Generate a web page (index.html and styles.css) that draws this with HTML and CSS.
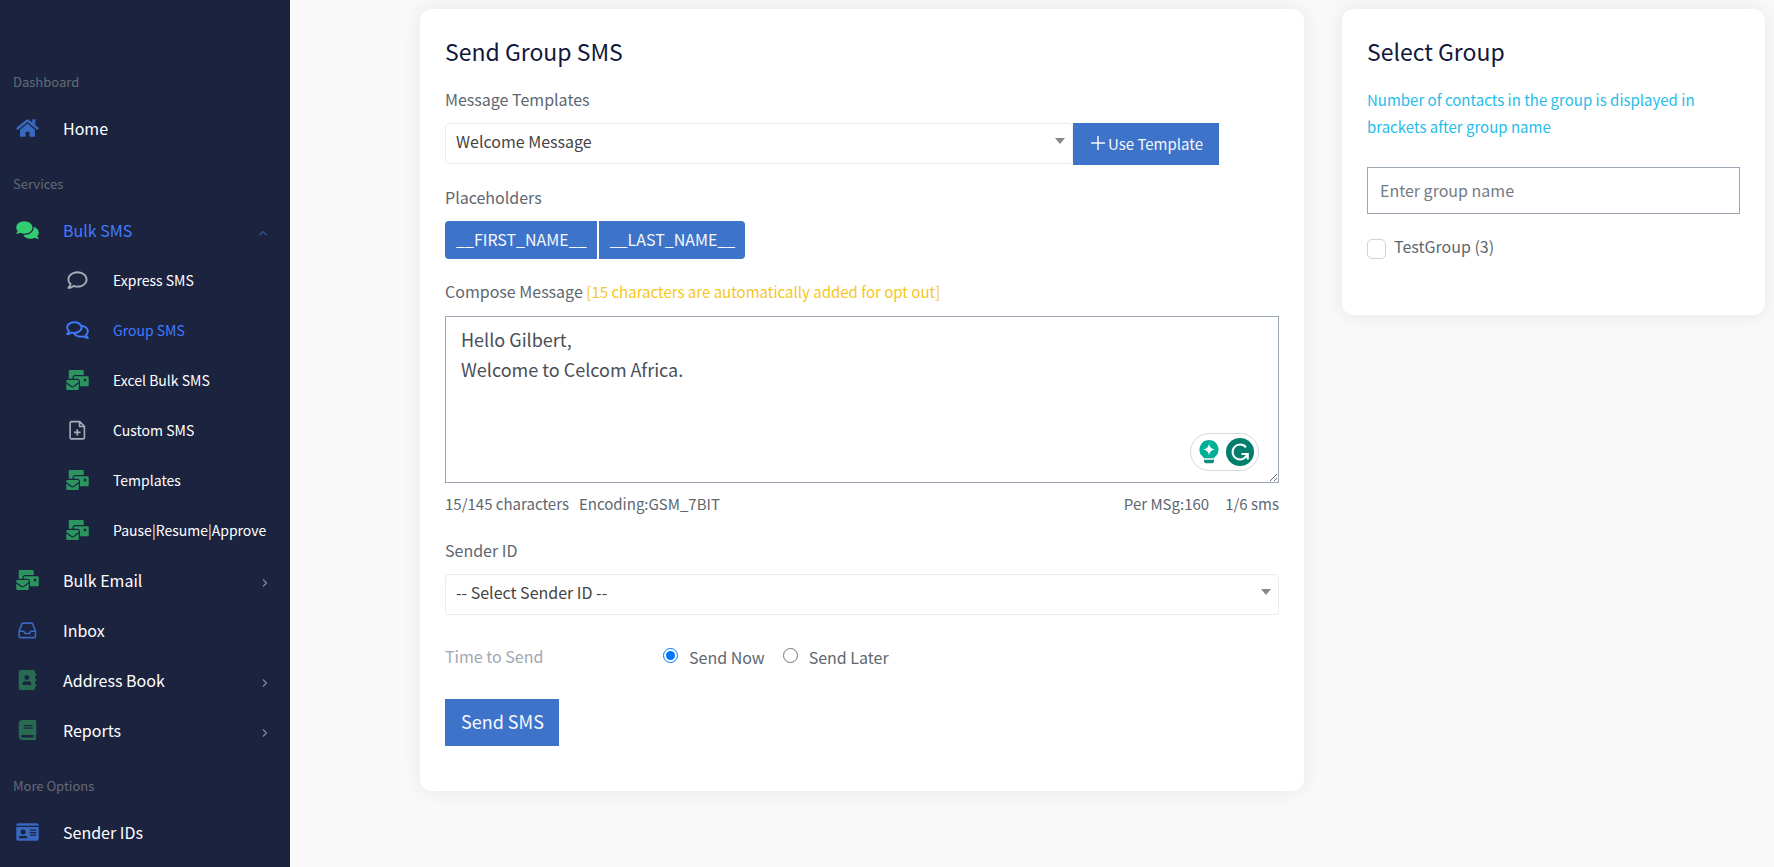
FILE: index.html
```html
<!DOCTYPE html>
<html lang="en">
<head>
<meta charset="utf-8">
<meta name="viewport" content="width=device-width, initial-scale=1">
<title>Send Group SMS</title>
<link rel="stylesheet" href="styles.css">
</head>
<body>
<svg class="sprite" aria-hidden="true">
  <symbol id="i-home" viewBox="0 0 576 512"><path d="M280.37 148.26L96 300.11V464a16 16 0 0 0 16 16l112.06-.29a16 16 0 0 0 15.92-16V368a16 16 0 0 1 16-16h64a16 16 0 0 1 16 16v95.64a16 16 0 0 0 16 16.05L464 480a16 16 0 0 0 16-16V300L295.67 148.26a12.19 12.19 0 0 0-15.3 0zM571.6 251.47L488 182.56V44.05a12 12 0 0 0-12-12h-56a12 12 0 0 0-12 12v72.61L318.47 43a48 48 0 0 0-61 0L4.34 251.47a12 12 0 0 0-1.6 16.9l25.5 31A12 12 0 0 0 45.15 301l235.22-193.74a12.19 12.19 0 0 1 15.3 0L530.9 301a12 12 0 0 0 16.9-1.6l25.5-31a12 12 0 0 0-1.7-16.93z"/></symbol>
  <symbol id="i-comments-solid" viewBox="0 0 576 512"><path d="M416 192c0-88.4-93.1-160-208-160S0 103.6 0 192c0 34.3 14.1 65.9 38 92-13.4 30.2-35.5 54.2-35.8 54.5-2.2 2.3-2.8 5.7-1.5 8.7S4.8 352 8 352c36.6 0 66.9-12.3 88.7-25 32.2 15.7 70.3 25 111.3 25 114.9 0 208-71.6 208-160zm122 220c23.9-26 38-57.7 38-92 0-66.9-53.5-124.2-129.3-148.1.9 6.6 1.3 13.3 1.3 20.1 0 105.9-107.7 192-240 192-10.8 0-21.3-.8-31.7-1.9C207.8 439.6 281.8 480 368 480c41 0 79.1-9.2 111.3-25 21.8 12.7 52.1 25 88.7 25 3.2 0 6.1-1.9 7.3-4.8 1.3-2.9.7-6.3-1.5-8.7-.3-.3-22.4-24.2-35.8-54.5z"/></symbol>
  <symbol id="i-comment" viewBox="-32 0 576 512"><path d="M256 32C114.6 32 0 125.1 0 240c0 47.6 19.9 91.2 52.9 126.3C38 405.7 7 439.1 6.5 439.5c-6.6 7-8.4 17.2-4.6 26S14.4 480 24 480c61.5 0 110-25.7 139.1-46.3C192 442.8 223.2 448 256 448c141.4 0 256-93.1 256-208S397.4 32 256 32zm0 368c-26.7 0-53.1-4.1-78.4-12.1l-22.7-7.2-19.5 13.8c-14.3 10.1-33.9 21.4-57.5 29 7.3-12.1 14.4-25.7 19.9-40.2l10.6-28.1-20.6-21.8C69.7 314.1 48 282.2 48 240c0-88.2 93.3-160 208-160s208 71.8 208 160-93.3 160-208 160z"/></symbol>
  <symbol id="i-comments" viewBox="0 0 576 512"><path d="M532 386.2c27.5-27.1 44-61.1 44-98.2 0-80-76.5-146.1-176.2-157.9C368.3 72.5 294.3 32 208 32 93.1 32 0 103.6 0 192c0 37 16.5 71 44 98.2-15.3 30.7-37.3 54.5-37.7 54.9-6.3 6.7-8.1 16.5-4.4 25 3.6 8.5 12 14 21.2 14 53.5 0 96.7-20.2 125.2-38.8 9.2 2.1 18.7 3.7 28.4 4.9C208.1 407.6 281.8 448 368 448c20.8 0 40.8-2.4 59.8-6.8C456.3 459.7 499.4 480 553 480c9.2 0 17.5-5.5 21.2-14 3.6-8.5 1.9-18.3-4.4-25-.4-.3-22.5-24.1-37.8-54.8zm-392.8-92.3L122.1 305c-14.1 9.1-28.5 16.3-43.1 21.4 2.7-4.7 5.4-9.7 8-14.8l15.5-31.1L77.7 256C64.2 242.6 48 220.7 48 192c0-60.7 73.3-112 160-112s160 51.3 160 112-73.3 112-160 112c-16.5 0-33-1.9-49-5.6l-19.8-4.5zM498.3 352l-24.7 24.4 15.5 31.1c2.6 5.1 5.3 10.1 8 14.8-14.6-5.1-29-12.3-43.1-21.4l-17.1-11.1-19.9 4.6c-16 3.7-32.5 5.6-49 5.6-54 0-102.2-20.1-131.3-49.7C338 339.5 416 272.9 416 192c0-3.4-.4-6.7-.7-10C479.7 196.5 528 238.8 528 288c0 28.7-16.2 50.6-29.7 64z"/></symbol>
  <symbol id="i-bulk" viewBox="0 0 576 512"><path d="M160 448c-25.6 0-51.2-22.4-64-32-64-44.8-83.2-60.8-96-70.4V480c0 17.67 14.33 32 32 32h256c17.67 0 32-14.33 32-32V345.6c-12.8 9.6-32 25.6-96 70.4-12.8 9.6-38.4 32-64 32zm128-192H32c-17.67 0-32 14.33-32 32v16c25.6 19.2 22.4 19.2 115.2 86.4 9.6 6.4 28.8 25.6 44.8 25.6s35.2-19.2 44.8-22.4c92.8-67.2 89.6-67.2 115.2-86.4V288c0-17.67-14.33-32-32-32zm256-96H224c-17.67 0-32 14.33-32 32v32h96c33.21 0 60.59 25.42 63.71 57.82l.29-.22V416h192c17.67 0 32-14.33 32-32V192c0-17.67-14.33-32-32-32zm-32 128h-64v-64h64v64zm-352-96c0-35.29 28.71-64 64-64h224V32c0-17.67-14.33-32-32-32H96C78.33 0 64 14.33 64 32v192h96v-32z"/></symbol>
  <symbol id="i-file" viewBox="0 0 23 20"><path fill="none" stroke="currentColor" stroke-width="1.6" stroke-linejoin="round" d="M5.500 1.600h8.200l4.700 4.700v11.200a1.400 1.400 0 0 1-1.400 1.400H5.500a1.400 1.400 0 0 1-1.400-1.400V3A1.400 1.400 0 0 1 5.500 1.600zM13.500 1.600v4.900h4.900M11.300 9.200v6.400M8.100 12.400h6.400"/></symbol>
  <symbol id="i-inbox" viewBox="0 0 23 20"><path fill="none" stroke="currentColor" stroke-width="1.600" stroke-linejoin="round" d="M3.100 11.200 5.900 3.900a1.400 1.400 0 0 1 1.300-.8h8.200a1.400 1.400 0 0 1 1.300.8l2.800 7.300v5a1.400 1.400 0 0 1-1.400 1.400H4.500a1.400 1.400 0 0 1-1.400-1.400zM3.100 11.200h4.500l1.500 2.300h4.400l1.500-2.300h4.500"/></symbol>
  <symbol id="i-address" viewBox="-64 0 576 512"><path fill-rule="evenodd" d="M436 160c6.6 0 12-5.4 12-12v-40c0-6.6-5.4-12-12-12h-20V48c0-26.5-21.5-48-48-48H48C21.5 0 0 21.5 0 48v416c0 26.5 21.5 48 48 48h320c26.5 0 48-21.5 48-48v-48h20c6.6 0 12-5.4 12-12v-40c0-6.6-5.4-12-12-12h-20v-64h20c6.6 0 12-5.4 12-12v-40c0-6.6-5.4-12-12-12h-20v-64h20zm-228-32c35.3 0 64 28.7 64 64s-28.7 64-64 64-64-28.7-64-64 28.7-64 64-64zm112 236.8c0 10.6-10 19.2-22.4 19.2H118.4C106 384 96 375.4 96 364.8v-19.2c0-31.8 30.1-57.6 67.2-57.6h5c12.3 5.1 25.7 8 39.8 8s27.6-2.9 39.8-8h5c37.1 0 67.2 25.8 67.2 57.6v19.2z"/></symbol>
  <symbol id="i-book" viewBox="-64 0 576 512"><path fill-rule="evenodd" d="M448 360V24c0-13.3-10.7-24-24-24H96C43 0 0 43 0 96v320c0 53 43 96 96 96h328c13.3 0 24-10.7 24-24v-16c0-7.5-3.5-14.3-8.9-18.7-4.2-15.4-4.2-59.3 0-74.7 5.4-4.3 8.9-11.1 8.9-18.6zM128 134c0-3.3 2.7-6 6-6h212c3.3 0 6 2.7 6 6v20c0 3.3-2.7 6-6 6H134c-3.3 0-6-2.7-6-6v-20zm0 64c0-3.3 2.7-6 6-6h212c3.3 0 6 2.7 6 6v20c0 3.3-2.7 6-6 6H134c-3.3 0-6-2.7-6-6v-20zm253.4 250H96c-17.7 0-32-14.3-32-32 0-17.6 14.4-32 32-32h285.4c-1.900 17.100-1.900 46.900 0 64z"/></symbol>
  <symbol id="i-card" viewBox="0 0 576 512"><path fill-rule="evenodd" d="M528 32H48C21.5 32 0 53.5 0 80v16h576V80c0-26.5-21.5-48-48-48zM0 432c0 26.5 21.5 48 48 48h480c26.5 0 48-21.5 48-48V128H0v304zM352 192h160v32H352zM352 256h160v32H352zM352 320h160v32H352zM176 192c35.3 0 64 28.7 64 64s-28.7 64-64 64-64-28.7-64-64 28.7-64 64-64zM67.1 396.2C75.5 370.5 99.6 352 128 352h8.2c12.3 5.1 25.7 8 39.8 8s27.6-2.9 39.8-8h8.2c28.4 0 52.5 18.5 60.9 44.2 3.2 9.9-5.2 19.8-15.6 19.8H82.7c-10.4 0-18.8-10-15.6-19.8z"/></symbol>
  <symbol id="i-chevron" viewBox="0 0 10 10"><path fill="none" stroke="currentColor" stroke-width="1.2" d="M3 1.500 6.500 5 3 8.500"/></symbol>
</svg>

<div class="app">
  <nav class="sidebar" aria-label="Main">
    <h2 class="nav-heading">Dashboard</h2>
    <a class="nav-link" href="#"><svg class="icon blue"><use href="#i-home"/></svg>Home</a>
    <h2 class="nav-heading">Services</h2>
    <a class="nav-link current" href="#"><svg class="icon lime"><use href="#i-comments-solid"/></svg>Bulk SMS<svg class="chevron up"><use href="#i-chevron"/></svg></a>
    <div class="subnav">
      <a class="nav-link" href="#"><svg class="icon grey"><use href="#i-comment"/></svg>Express SMS</a>
      <a class="nav-link current" href="#"><svg class="icon"><use href="#i-comments"/></svg>Group SMS</a>
      <a class="nav-link" href="#"><svg class="icon green"><use href="#i-bulk"/></svg>Excel Bulk SMS</a>
      <a class="nav-link" href="#"><svg class="icon grey"><use href="#i-file"/></svg>Custom SMS</a>
      <a class="nav-link" href="#"><svg class="icon green"><use href="#i-bulk"/></svg>Templates</a>
      <a class="nav-link" href="#"><svg class="icon green"><use href="#i-bulk"/></svg>Pause|Resume|Approve</a>
    </div>
    <a class="nav-link" href="#"><svg class="icon green"><use href="#i-bulk"/></svg>Bulk Email<svg class="chevron"><use href="#i-chevron"/></svg></a>
    <a class="nav-link" href="#"><svg class="icon blue"><use href="#i-inbox"/></svg>Inbox</a>
    <a class="nav-link" href="#"><svg class="icon forest"><use href="#i-address"/></svg>Address Book<svg class="chevron"><use href="#i-chevron"/></svg></a>
    <a class="nav-link" href="#"><svg class="icon forest"><use href="#i-book"/></svg>Reports<svg class="chevron"><use href="#i-chevron"/></svg></a>
    <h2 class="nav-heading">More Options</h2>
    <a class="nav-link" href="#"><svg class="icon blue"><use href="#i-card"/></svg>Sender IDs</a>
  </nav>

  <main class="content">
    <form class="card">
      <h1 class="card-title">Send Group SMS</h1>

      <div class="field">
        <label class="label" for="template">Message Templates</label>
        <div class="template-row">
          <span class="select-box"><select class="select" id="template"><option>Welcome Message</option></select></span>
          <button class="btn btn-template" type="button"><svg class="plus" viewBox="0 0 14 14"><path d="M7 0v14M0 7h14" stroke="currentColor" stroke-width="1.5"/></svg>Use Template</button>
        </div>
      </div>

      <div class="field">
        <span class="label">Placeholders</span>
        <div class="btn-group">
          <button class="btn btn-tag" type="button">__FIRST_NAME__</button>
          <button class="btn btn-tag" type="button">__LAST_NAME__</button>
        </div>
      </div>

      <div class="compose">
        <label class="label" for="message">Compose Message <span class="note">[15 characters are automatically added for opt out]</span></label>
        <div class="message-box">
          <textarea class="message" id="message">Hello Gilbert,
Welcome to Celcom Africa.</textarea>
          <div class="assist">
            <svg class="bulb" viewBox="0 0 20 24"><path fill="#00b096" d="M10 0a9.500 9.500 0 0 1 6.300 16.600L15 18.300H5l-1.300-1.700A9.500 9.500 0 0 1 10 0z"/><path fill="#fff" d="M10 4q.9 4.600 5.500 5.500-4.600.9-5.500 5.500-.9-4.600-5.500-5.500Q9.100 8.600 10 4z"/><path fill="#0b8f7c" d="M5 19.800h10v1.400a2 2 0 0 1-2 2H7a2 2 0 0 1-2-2z"/></svg>
            <svg class="glyph" viewBox="0 0 28 28"><circle cx="14" cy="14" r="14" fill="#027e6f"/><path fill="none" stroke="#fff" stroke-width="2" d="M20 9.300A7.500 7.500 0 1 0 21.300 16M15.500 16h6.300v5.500"/></svg>
          </div>
        </div>
        <div class="stats">
          <span>15/145 characters</span><span>Encoding:GSM_7BIT</span>
          <span class="stats-end">Per MSg:160</span><span class="stats-last">1/6 sms</span>
        </div>
      </div>

      <div class="field sender">
        <label class="label" for="sender">Sender ID</label>
        <span class="select-box"><select class="select" id="sender"><option>-- Select Sender ID --</option></select></span>
      </div>

      <div class="timing" role="radiogroup" aria-labelledby="time-label">
        <span class="timing-label" id="time-label">Time to Send</span>
        <label class="choice"><input class="radio" type="radio" name="when" checked>Send Now</label>
        <label class="choice"><input class="radio" type="radio" name="when">Send Later</label>
      </div>

      <button class="btn btn-send" type="button">Send SMS</button>
    </form>

    <section class="card">
      <h1 class="card-title">Select Group</h1>
      <p class="info">Number of contacts in the group is displayed in brackets after group name</p>
      <input class="search" type="text" placeholder="Enter group name" aria-label="Enter group name">
      <label class="check"><input class="checkbox" type="checkbox">TestGroup (3)</label>
    </section>
  </main>
</div>
</body>
</html>
```

FILE: styles.css
```css
*, *::before, *::after { box-sizing: border-box; }

body {
  margin: 0;
  background: #f9f9f9;
  color: #5e6770;
  font-family: "Noto Sans CJK SC", "Noto Sans", sans-serif;
  font-size: 16px;
  line-height: 27px;
}

h1, h2, p { margin: 0; font-weight: 400; }
button, input, select, textarea { margin: 0; font: inherit; color: inherit; }
.sprite { display: none; }

.app { display: flex; align-items: stretch; height: 100vh; overflow: hidden; }

/* Sidebar */
.sidebar {
  flex: 0 0 290px;
  padding-top: 52px;
  background: #1c233f;
  overflow: hidden;
}
.nav-heading {
  height: 52px;
  padding: 16px 13px 0;
  color: #646b76;
  font-size: 13px;
}
.nav-link {
  display: flex;
  align-items: center;
  height: 50px;
  padding: 0 20px 2px 16px;
  color: #fff;
  text-decoration: none;
  white-space: nowrap;
}
.nav-link.current { color: #407bff; }
.subnav { font-size: 14px; }
.subnav .nav-link { padding-left: 66px; }
.icon { flex: none; width: 23px; height: 20px; margin-right: 24px; fill: currentColor; }
.blue { color: #3868c0; }
.lime { color: #33cc71; }
.grey { color: #a9acb6; }
.green { color: #2b9560; }
.forest { color: #266b52; }
.chevron { width: 10px; height: 10px; margin: 5px 0 0 auto; color: #83879a; }
.chevron.up { margin-right: 2px; color: #32559f; transform: rotate(-90deg); }

/* Content */
.content {
  flex: 1;
  display: grid;
  grid-template-columns: calc((100% + 38px) * 2 / 3 - 38px) 1fr;
  align-items: start;
  gap: 38px;
  min-width: 0;
  padding: 9px 9px 9px 130px;
}
.card {
  padding: 24px 25px 45px;
  border-radius: 12px;
  background: #fff;
  box-shadow: 0 0 20px rgba(0, 0, 0, 0.08);
}
.card-title { margin-bottom: 17px; color: #12183b; font-size: 23px; line-height: 36px; }
.field { margin-bottom: 19px; }
.label { display: block; margin-bottom: 10px; }
.note { color: #f5c723; font-size: 15px; }

.btn { border: 0; background: #3e73ca; color: #f4f7fd; cursor: pointer; }
.template-row { display: flex; align-items: flex-start; padding-right: 60px; }
.template-row .select-box { flex: 1; }
.btn-template { display: flex; align-items: center; gap: 3px; height: 42px; padding: 0 16px 2px 18px; font-size: 15px; }
.plus { width: 14px; height: 14px; }

.select-box { display: block; position: relative; }
.select-box::after {
  content: "";
  position: absolute;
  top: 15px;
  right: 8px;
  border: 5px solid transparent;
  border-top: 6px solid #888;
  border-bottom: 0;
  pointer-events: none;
}
.select {
  display: block;
  width: 100%;
  height: 41px;
  padding: 0 24px 5px 10px;
  border: 1px solid #ebedf0;
  border-radius: 4px;
  background: #fff;
  color: #444;
  appearance: none;
}

.btn-group { display: flex; gap: 2px; }
.btn-tag { height: 38px; padding: 0 10px 2px 11px; }
.btn-tag:first-child { border-radius: 4px 0 0 4px; }
.btn-tag:last-child { border-radius: 0 4px 4px 0; }

.compose .label { margin-bottom: 11px; }
.message-box { position: relative; }
.message {
  display: block;
  width: 100%;
  height: 167px;
  padding: 7px 15px;
  border: 1px solid #9ba8b4;
  background: #fff;
  color: #495057;
  font-size: 18px;
  line-height: 30px;
}
.assist {
  position: absolute;
  right: 20px;
  bottom: 12px;
  display: flex;
  align-items: center;
  justify-content: space-between;
  width: 69px;
  height: 38px;
  padding: 0 4px 0 8px;
  border: 1px solid #d5d7e3;
  border-radius: 19px;
  background: #fff;
}
.bulb { width: 20px; height: 24px; }
.glyph { width: 28px; height: 28px; }
.stats { display: flex; gap: 10px; margin: 7px 0 20px; font-size: 15px; }
.stats-end { margin-left: auto; }
.stats-last { margin-left: 6px; }
.sender { margin-bottom: 27px; }

.timing { display: flex; align-items: center; margin-bottom: 28px; }
.timing-label { flex: 0 0 calc((100% + 38px) / 4); color: #a0a7b3; }
.choice { display: flex; align-items: center; gap: 11px; margin-right: 18px; padding-top: 2px; }
.radio { width: 15px; height: 15px; margin-bottom: 4px; }
.btn-send { display: block; height: 47px; padding: 0 15px 2px 16px; font-size: 18px; }

/* Group picker */
.info { margin-bottom: 27px; color: #27bde8; font-size: 15px; }
.search { display: block; width: 100%; height: 47px; margin-bottom: 19px; padding: 0 12px 2px; border: 1px solid #9ba8b4; background: #fff; }
.search::placeholder { color: #737b84; opacity: 1; }
.check { display: flex; align-items: center; gap: 8px; margin-bottom: 10px; }
.checkbox { width: 19px; height: 20px; margin-top: 5px; border: 1px solid #ced3dc; border-radius: 5px; background: #fff; appearance: none; }
.checkbox:checked { background: #3e73ca; }
```
